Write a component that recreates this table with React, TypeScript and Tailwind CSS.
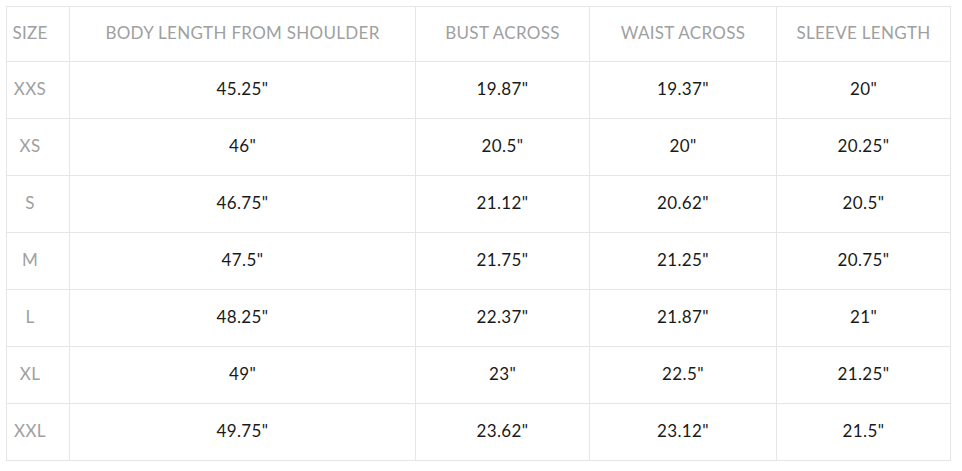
const headers = ["SIZE", "BODY LENGTH FROM SHOULDER", "BUST ACROSS", "WAIST ACROSS", "SLEEVE LENGTH"];

const rows = [
  ["XXS", "45.25\"", "19.87\"", "19.37\"", "20\""],
  ["XS", "46\"", "20.5\"", "20\"", "20.25\""],
  ["S", "46.75\"", "21.12\"", "20.62\"", "20.5\""],
  ["M", "47.5\"", "21.75\"", "21.25\"", "20.75\""],
  ["L", "48.25\"", "22.37\"", "21.87\"", "21\""],
  ["XL", "49\"", "23\"", "22.5\"", "21.25\""],
  ["XXL", "49.75\"", "23.62\"", "23.12\"", "21.5\""],
];

const widths = ["w-[63px]", "w-[346px]", "w-[174px]", "w-[187px]", "w-[174px]"];

export default function App() {
  return (
    <div className="min-h-[471px] w-[962px] bg-white pl-[6px] pt-[6px] font-['Lato','Noto_Sans',sans-serif]">
      <table className="w-[945px] table-fixed border-collapse border border-[#e6e6e6]">
        <thead>
          <tr className="h-[55px]">
            {headers.map((h, i) => (
              <th
                key={h}
                className={`${widths[i]} border border-[#e6e6e6] pb-[2px] text-center text-[17px] font-normal tracking-[0.3px] text-[#a0a0a0] ${i === 0 ? "pr-[16px]" : ""}`}
              >
                {h}
              </th>
            ))}
          </tr>
        </thead>
        <tbody>
          {rows.map((r) => (
            <tr key={r[0]} className="h-[57px]">
              {r.map((c, i) => (
                <td
                  key={i}
                  className={`border border-[#e6e6e6] pb-[2px] text-center text-[17px] tracking-[0.4px] ${i === 0 ? "pr-[16px] text-[#a0a0a0]" : "text-[#1a1a1a]"}`}
                >
                  {c}
                </td>
              ))}
            </tr>
          ))}
        </tbody>
      </table>
    </div>
  );
}
